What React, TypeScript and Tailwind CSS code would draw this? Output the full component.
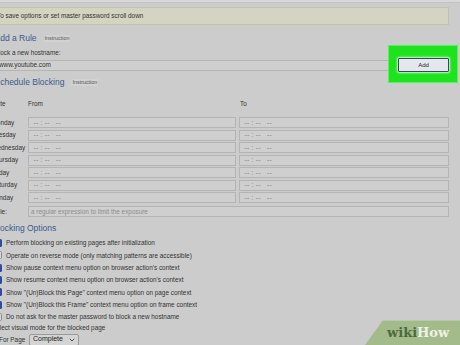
const days = ['Monday', 'Tuesday', 'Wednesday', 'Thursday', 'Friday', 'Saturday', 'Sunday'];

const options = [
  { label: 'Perform blocking on existing pages after initialization', checked: true },
  { label: 'Operate on reverse mode (only matching patterns are accessible)', checked: false },
  { label: "Show pause context menu option on browser action's context", checked: true },
  { label: "Show resume context menu option on browser action's context", checked: true },
  { label: 'Show "(Un)Block this Page" context menu option on page context', checked: true },
  { label: 'Show "(Un)Block this Frame" context menu option on frame context', checked: true },
  { label: 'Do not ask for the master password to block a new hostname', checked: false },
];

function TimeInput({ width }: { width: string }) {
  return (
    <div
      className={`${width} h-[11px] border border-[#b4b4b4] bg-[#cfcfcf] pl-[5px] flex items-center text-[6.5px] tracking-[0.3px] text-[#7c7c7c] whitespace-pre`}
    >
      {'-- : --   --'}
    </div>
  );
}

function Heading({ title, tag }: { title: string; tag?: string }) {
  return (
    <div className="flex items-center h-[12px]">
      <h2 className="text-[8.5px] leading-[12px] text-[#3b5a8c]">{title}</h2>
      {tag && (
        <span className="ml-[7px] px-[1px] text-[5.4px] leading-[7px] text-[#555] bg-[#d2d2d2]">{tag}</span>
      )}
    </div>
  );
}

export default function App() {
  return (
    <div className="relative w-[460px] h-[345px] overflow-hidden bg-[#cccccc] text-[#333] font-['Liberation_Sans',Arial,sans-serif]">
      <div className="h-[3px] bg-[#d8d8db] border-b border-[#c3c3c3]" />

      <div className="-ml-[8px] w-[457px]">
        <div className="mt-[4px] h-[18px] border border-[#c2c3a8] bg-[#d3d4c1] pl-[4px] flex items-center text-[6.4px]">
          To save options or set master password scroll down
        </div>

        <div className="mt-[7px] pl-[2.5px]">
          <Heading title="Add a Rule" tag="Instruction" />
        </div>
        <div className="mt-[5px] pl-[2.5px] text-[6.4px] leading-[8px]">Block a new hostname:</div>

        <div className="mt-[1px] flex items-center h-[14px]">
          <div className="w-[403px] h-[11px] border-y border-[#b4b4b4] bg-[#cfcfcf] pl-[7px] flex items-center text-[6.4px] text-[#333]">
            www.youtube.com
          </div>
          <div className="relative ml-[5px]">
            <div className="absolute left-[-10px] top-[-13px] w-[70px] h-[38px] bg-[#1fe21f] border border-[#5af05a]" />
            <button className="relative w-[51px] h-[14px] border border-[#36456e] bg-[#e6e7ec] rounded-[1px] shadow-[0_0_2px_1px_rgba(255,255,255,0.8)] text-[6px] text-[#222] flex items-center justify-center">
              Add
            </button>
          </div>
        </div>

        <div className="mt-[4px] pl-[2.5px]">
          <Heading title="Schedule Blocking" tag="Instruction" />
        </div>

        <div className="mt-[12px] flex h-[8px] items-center text-[6.4px]">
          <span className="w-[36px]">Date</span>
          <span className="w-[211px]">From</span>
          <span className="pl-[1px]">To</span>
        </div>

        <div className="mt-[9px] flex flex-col gap-[1.5px]">
          {days.map((day) => (
            <div key={day} className="flex items-center h-[11px] text-[6.4px]">
              <span className="w-[36px] -ml-[0.5px]">{day}</span>
              <TimeInput width="w-[208px]" />
              <div className="ml-[3px]">
                <TimeInput width="w-[210px]" />
              </div>
            </div>
          ))}
        </div>

        <div className="mt-[3px] flex items-center h-[11px] text-[6.4px]">
          <span className="w-[36px]">Rule:</span>
          <div className="w-[421px] h-[11px] border border-[#b4b4b4] bg-[#cfcfcf] pl-[2px] flex items-center text-[#8d8d8d]">
            a regular expression to limit the exposure
          </div>
        </div>

        <div className="mt-[5px] pl-[0.5px]">
          <Heading title="Blocking Options" />
        </div>

        <div className="mt-[3px] flex flex-col pl-[2px]">
          {options.map((opt) => (
            <div key={opt.label} className="flex items-center h-[12.3px] text-[6.4px]">
              {opt.checked ? (
                <span className="w-[8px] h-[8px] rounded-[1.5px] bg-[#2f4c9c]" />
              ) : (
                <span className="w-[8px] h-[8px] rounded-[1.5px] border border-[#8c8c8c] bg-[#d6d6d6]" />
              )}
              <span className="ml-[4px]">{opt.label}</span>
            </div>
          ))}
        </div>

        <div className="mt-[1px] text-[6.4px] leading-[8px]">Select visual mode for the blocked page</div>

        <div className="mt-[1px] flex items-center h-[13px] pl-[7px] text-[6.4px]">
          <span className="w-[30px]">For Page</span>
          <div className="w-[50px] h-[12px] border border-[#9a9a9a] rounded-[2px] bg-[#d4d4d4] px-[3px] flex items-center justify-between text-[7px] text-[#222]">
            <span>Complete</span>
            <svg width="6" height="4" viewBox="0 0 6 4" fill="none" stroke="#444" strokeWidth="0.9">
              <path d="M0.8 0.8 L3 3 L5.2 0.8" />
            </svg>
          </div>
        </div>
      </div>

      <div className="absolute right-0 bottom-0 w-[95px] h-[25px]">
        <svg className="absolute inset-0" width="95" height="25" viewBox="0 0 95 25">
          <polygon points="18,0 95,0 95,25 0,25" fill="#a3bb8b" />
          <line x1="18" y1="0.5" x2="95" y2="0.5" stroke="#b9cba6" strokeWidth="1" />
        </svg>
        <div className="relative pl-[22px] pt-[5px] text-[13px] leading-[15px] font-bold font-['DejaVu_Serif',serif]">
          <span className="text-[#4c6a3e]">wiki</span>
          <span className="text-[#eef2e6]">How</span>
        </div>
      </div>
    </div>
  );
}
